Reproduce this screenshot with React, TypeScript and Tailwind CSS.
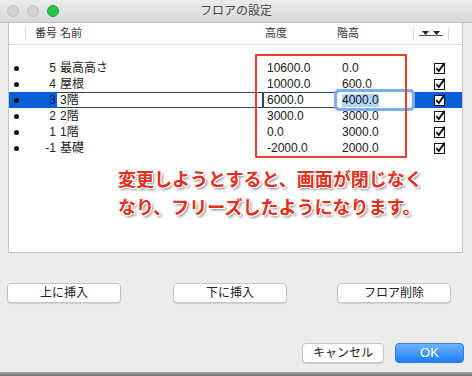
import React from "react";

type Floor = { no: number; name: string; height: string; step: string; selected?: boolean };

const floors: Floor[] = [
  { no: 5, name: "最高高さ", height: "10600.0", step: "0.0" },
  { no: 4, name: "屋根", height: "10000.0", step: "600.0" },
  { no: 3, name: "3階", height: "6000.0", step: "4000.0", selected: true },
  { no: 2, name: "2階", height: "3000.0", step: "3000.0" },
  { no: 1, name: "1階", height: "0.0", step: "3000.0" },
  { no: -1, name: "基礎", height: "-2000.0", step: "2000.0" },
];

const CheckBox = () => (
  <svg width="12" height="12" viewBox="0 0 12 12" className="block">
    <rect x="0.5" y="1.5" width="10" height="10" fill="#fff" stroke="#111" strokeWidth="1" />
    <path d="M2.3 6.2 L4.8 9 L10.6 0.8" fill="none" stroke="#111" strokeWidth="2" />
  </svg>
);

const SortIcon = () => (
  <svg width="24" height="7" viewBox="0 0 24 7" className="block">
    <line x1="0" y1="5.5" x2="24" y2="5.5" stroke="#555" strokeWidth="1" />
    <path d="M3 1 L10 1 L6.5 5 Z" fill="#222" />
    <path d="M14 1 L21 1 L17.5 5 Z" fill="#222" />
  </svg>
);

const Row = ({ f }: { f: Floor }) => {
  if (f.selected) {
    return (
      <div className="flex h-[16px] bg-[#0c5ed6] items-stretch text-[12px] leading-[14px]">
        <div className="w-[14px] flex items-center justify-center">
          <div className="w-[5px] h-[5px] rounded-full bg-[#111]" />
        </div>
        <div className="w-[34px] text-right pr-[1px] text-[#0b1f44] flex items-center justify-end">{f.no}</div>
        <div className="w-[205px] bg-white border-y border-[#24466f] pl-[3px] flex items-center text-[#111]">
          {f.name}
        </div>
        <div className="w-[75px] bg-white border-y border-l-2 border-[#24466f] pl-[3px] flex items-center text-[#111]">
          {f.height}
        </div>
        <div className="w-[75px] bg-white pl-[5px] flex items-center text-[#111] outline outline-[3px] outline-[#7aaef0] rounded-[2px]">
          <span className="bg-[#b4d5fe] leading-[13px]">{f.step}</span>
        </div>
        <div className="flex-1 pl-[22px] flex items-center">
          <CheckBox />
        </div>
      </div>
    );
  }
  return (
    <div className="flex h-[16px] items-center text-[12px] leading-[14px] text-[#1a1a1a]">
      <div className="w-[14px] flex items-center justify-center">
        <div className="w-[5px] h-[5px] rounded-full bg-[#111]" />
      </div>
      <div className="w-[34px] text-right pr-[1px]">{f.no}</div>
      <div className="w-[205px] pl-[3px]">{f.name}</div>
      <div className="w-[75px] pl-[5px]">{f.height}</div>
      <div className="w-[75px] pl-[5px]">{f.step}</div>
      <div className="flex-1 pl-[22px]">
        <CheckBox />
      </div>
    </div>
  );
};

const Button = ({ label, w }: { label: string; w: string }) => (
  <button
    className={`${w} h-[20px] bg-white border border-[#c6c6c6] rounded-[4px] shadow-[0_1px_1px_rgba(0,0,0,0.12)] text-[12px] text-[#222] flex items-center justify-center`}
  >
    {label}
  </button>
);

export default function App() {
  return (
    <div className="w-[472px] h-[376px] bg-[#ececec] flex flex-col overflow-hidden font-['Liberation_Sans','Noto_Sans_CJK_JP',sans-serif]">
      {/* title bar */}
      <div className="h-[23px] shrink-0 grid grid-cols-[1fr_auto_1fr] items-center border-b border-[#c2c2c2] bg-gradient-to-b from-[#ececec] to-[#d8d8d8]">
        <div className="flex items-center gap-[8px] pl-[7px]">
          <div className="w-[12px] h-[12px] rounded-full bg-[#d3d3d3] border border-[#c0c0c0]" />
          <div className="w-[12px] h-[12px] rounded-full bg-[#d3d3d3] border border-[#c0c0c0]" />
          <div className="w-[12px] h-[12px] rounded-full bg-[#2ac33f] border border-[#20a934]" />
        </div>
        <div className="text-[12px] text-[#4a4a4a]">フロアの設定</div>
        <div />
      </div>

      {/* table */}
      <div className="relative mx-[8px] w-[455px] h-[230px] shrink-0 bg-white border-x border-b border-[#c4c4c4]">
        <div className="flex h-[22px] items-center border-b border-[#dedede] text-[11px] text-[#333]">
          <div className="w-[16px]" />
          <div className="w-px h-[12px] bg-[#d8d8d8]" />
          <div className="w-[239px] pl-[9px]">番号 名前</div>
          <div className="w-[72px]">高度</div>
          <div className="w-[76px]">階高</div>
          <div className="w-px h-[12px] bg-[#d8d8d8]" />
          <div className="w-[34px] flex justify-center">
            <SortIcon />
          </div>
          <div className="w-px h-[12px] bg-[#d8d8d8]" />
        </div>

        <div className="pt-[15px]">
          {floors.map((f) => (
            <Row key={f.no} f={f} />
          ))}
        </div>

        <div className="mt-[8px] pl-[109px] text-[18px] leading-[28px] font-bold text-[#e2301e] font-['Noto_Sans_CJK_JP',sans-serif] [text-shadow:-1px_-1px_0_#fff,1px_-1px_0_#fff,-1px_1px_0_#fff,1px_1px_0_#fff,2px_2px_3px_rgba(0,0,0,0.55)]">
          <div>変更しようとすると、画面が閉じなく</div>
          <div>なり、フリーズしたようになります。</div>
        </div>

        {/* annotation frame */}
        <div className="absolute left-[246px] top-[31px] w-[152px] h-[104px] border-2 border-[#e6402e] rounded-[1px] pointer-events-none" />
      </div>

      {/* insert / delete buttons */}
      <div className="flex mt-[30px] pl-[7px]">
        <Button label="上に挿入" w="w-[114px]" />
        <div className="ml-[52px]">
          <Button label="下に挿入" w="w-[114px]" />
        </div>
        <div className="ml-[50px]">
          <Button label="フロア削除" w="w-[114px]" />
        </div>
      </div>

      {/* dialog buttons */}
      <div className="flex justify-end gap-[11px] mt-[40px] pr-[8px]">
        <Button label="キャンセル" w="w-[82px]" />
        <button className="w-[69px] h-[20px] rounded-[4px] bg-gradient-to-b from-[#6cb3fa] to-[#1b7ef5] border border-[#2a7fe8] text-white text-[13px] flex items-center justify-center">
          OK
        </button>
      </div>

      <div className="mt-auto h-[4px] bg-gradient-to-b from-[#a8a8a8] to-[#6e6e6e]" />
    </div>
  );
}
